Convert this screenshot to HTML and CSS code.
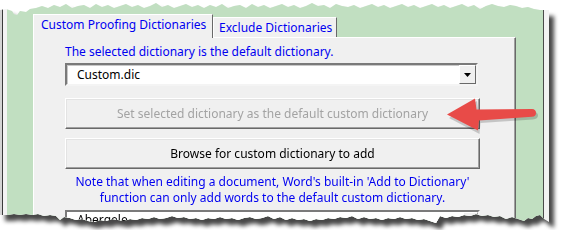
FILE: index.html
```html
<!DOCTYPE html>
<html lang="en">
<head>
    <meta charset="UTF-8">
    <title>Custom Proofing Dictionaries</title>
    <link rel="stylesheet" href="styles.css">
</head>
<body>
    <div class="shot">
        <div class="window">
            <div class="client">
                <div class="tabs">
                    <div class="tab active">Custom Proofing Dictionaries</div>
                    <div class="tab">Exclude Dictionaries</div>
                </div>
                <div class="panel">
                    <div class="label">The selected dictionary is the default dictionary.</div>
                    <div class="combo">
                        <div class="combo-text">Custom.dic</div>
                        <div class="combo-btn">
                            <svg width="7" height="4" viewBox="0 0 7 4"><path d="M0 0h7L3.5 4z" fill="#000"/></svg>
                        </div>
                    </div>
                    <div class="button disabled">Set selected dictionary as the default custom dictionary</div>
                    <div class="button browse">Browse for custom dictionary to add</div>
                    <div class="note">
                        Note that when editing a document, Word's built-in 'Add to Dictionary'<br>
                        function can only add words to the default custom dictionary.
                    </div>
                    <div class="listbox">
                        <div class="list-item">Abergele</div>
                        <div class="scroll-up"></div>
                    </div>
                </div>
            </div>

            <svg class="arrow" width="100" height="44" viewBox="0 0 100 44">
                <path d="M8 24 L36 7 L37.5 18 L92 17.5 Q97 18 97 21.5 Q97 25 92 25.5 L39.5 29 L38.5 40 Z" fill="#000" opacity="0.18" transform="translate(1 2)"/>
                <path d="M7 22.5 L35 6.5 L36.5 17.5 L92 17 Q96 17.3 96 21 Q96 24.5 92 24.8 L39 28.5 L38 38.5 Z" fill="#e84b48"/>
            </svg>
        </div>
    </div>
</body>
</html>
```

FILE: styles.css
```css
body {
    margin: 0;
    background: #fff;
    overflow: hidden;
}

.shot {
    width: 549px;
    filter: drop-shadow(5px 6px 2px rgba(0, 0, 0, 0.72));
}

.window {
    position: relative;
    height: 230px;
    overflow: hidden;
    padding: 0 5px 0 7px;
    background: linear-gradient(to right, #d4d4d4 0 2px, #3a3a3a 2px 3px, #f3f3f3 3px);
    font-family: "Noto Sans", "Liberation Sans", sans-serif;
    font-size: 12px;
    clip-path: polygon(
        0 10px, 6px 9px, 12px 11px, 14px 14px, 17px 15px, 20px 11px, 26px 12px, 30px 9px, 36px 8px, 42px 6px,
        48px 8px, 54px 5px, 60px 7px, 66px 4px, 72px 8px, 78px 6px, 84px 5px, 90px 8px, 96px 4px, 102px 7px,
        108px 5px, 114px 8px, 120px 6px, 126px 4px, 132px 7px, 138px 5px, 144px 8px, 150px 6px, 156px 3px, 162px 7px,
        168px 5px, 174px 8px, 180px 6px, 186px 4px, 192px 7px, 198px 5px, 204px 8px, 210px 5px, 216px 7px, 222px 4px,
        228px 8px, 234px 6px, 240px 5px, 246px 8px, 252px 4px, 258px 7px, 264px 5px, 270px 8px, 276px 6px, 282px 4px,
        288px 7px, 294px 5px, 300px 8px, 306px 6px, 312px 3px, 318px 6px, 324px 5px, 330px 8px, 336px 4px, 342px 6px,
        348px 7px, 354px 5px, 360px 8px, 366px 6px, 372px 4px, 378px 7px, 384px 5px, 390px 8px, 396px 6px, 402px 4px,
        408px 7px, 414px 5px, 420px 8px, 426px 6px, 432px 4px, 438px 7px, 444px 5px, 450px 8px, 456px 6px, 462px 4px,
        468px 7px, 474px 5px, 480px 9px, 486px 6px, 492px 4px, 498px 6px, 504px 7px, 510px 5px, 516px 6px, 522px 8px,
        528px 7px, 534px 9px, 540px 10px, 549px 10px,
        549px 222px, 544px 219px, 540px 215px, 536px 216px, 532px 219px, 528px 218px, 524px 221px, 518px 219px,
        512px 217px, 506px 219px, 500px 216px, 494px 217px, 488px 215px, 482px 216px, 476px 214px, 470px 216px,
        464px 215px, 458px 217px, 452px 216px, 446px 218px, 440px 216px, 436px 223px, 430px 221px, 424px 219px,
        418px 220px, 412px 218px, 406px 219px, 400px 217px, 394px 219px, 388px 218px, 382px 220px, 376px 218px,
        370px 219px, 364px 217px, 358px 219px, 352px 216px, 346px 218px, 340px 217px, 334px 219px, 328px 218px,
        322px 220px, 316px 219px, 310px 221px, 304px 219px, 298px 220px, 292px 218px, 286px 220px, 280px 217px,
        274px 219px, 268px 216px, 262px 218px, 256px 219px, 250px 217px, 244px 218px, 238px 220px, 232px 218px,
        226px 219px, 220px 217px, 214px 219px, 208px 218px, 202px 220px, 196px 218px, 190px 219px, 184px 217px,
        178px 218px, 172px 216px, 166px 218px, 160px 219px, 154px 217px, 148px 219px, 142px 218px, 136px 220px,
        130px 219px, 124px 221px, 118px 220px, 112px 219px, 106px 221px, 100px 220px, 94px 222px, 88px 221px,
        82px 219px, 76px 220px, 70px 218px, 64px 217px, 60px 220px, 56px 216px, 50px 215px, 44px 216px,
        38px 214px, 32px 215px, 26px 214px, 20px 215px, 14px 214px, 8px 215px, 0 215px
    );
}

.client {
    height: 100%;
    padding: 14px 0 0 26px;
    background: #c1dfc1;
    border-right: 1px solid #4a4a4a;
}

.tabs {
    display: flex;
    align-items: flex-end;
    height: 23px;
    position: relative;
    z-index: 1;
}

.tab {
    box-sizing: border-box;
    height: 20px;
    padding: 0 0 0 5px;
    width: 124px;
    line-height: 19px;
    color: #0000f0;
    background: #f0f0f0;
    border: 1px solid #fff;
    border-right-color: #696969;
    border-bottom: none;
}

.tab.active {
    height: 24px;
    width: 180px;
    margin-bottom: -1px;
    padding-left: 7px;
    line-height: 20px;
}

.panel {
    box-sizing: border-box;
    width: 483px;
    height: 200px;
    padding: 6px 0 0 31px;
    background: #f0f0f0;
    border: 1px solid #fff;
    border-right-color: #696969;
    border-bottom-color: #696969;
    box-shadow: inset -1px 0 #a0a0a0;
}

.label {
    line-height: 16px;
    color: #0000f0;
}

.combo {
    display: flex;
    box-sizing: border-box;
    width: 413px;
    height: 23px;
    margin-top: 3px;
    background: #fff;
    border: 2px solid;
    border-color: #7a7a7a #f4f4f4 #f4f4f4 #7a7a7a;
    box-shadow: inset 1px 1px #c8c8c8;
}

.combo-text {
    flex: 1;
    padding-left: 10px;
    line-height: 19px;
    color: #000;
}

.combo-btn {
    display: flex;
    align-items: center;
    justify-content: center;
    box-sizing: border-box;
    width: 17px;
    background: #f0f0f0;
    border: 1px solid;
    border-color: #fff #696969 #696969 #fff;
}

.button {
    box-sizing: border-box;
    width: 415px;
    height: 31px;
    line-height: 29px;
    text-align: center;
    color: #000;
    background: #f0f0f0;
    border: 1px solid;
    border-color: #fff #696969 #696969 #fff;
    box-shadow: inset -1px -1px #a0a0a0, inset 1px 1px #e3e3e3;
}

.button.disabled {
    margin-top: 12px;
    color: #a3a3a3;
}

.button.browse {
    margin-top: 9px;
}

.note {
    width: 415px;
    margin-top: 5px;
    line-height: 16px;
    text-align: center;
    color: #0000f0;
}

.listbox {
    position: relative;
    box-sizing: border-box;
    width: 415px;
    height: 60px;
    margin-top: 4px;
    background: #fff;
    border: 2px solid;
    border-color: #7a7a7a #f4f4f4 #f4f4f4 #7a7a7a;
}

.list-item {
    padding-left: 10px;
    line-height: 16px;
}

.scroll-up {
    position: absolute;
    top: 0;
    right: 0;
    width: 15px;
    height: 16px;
    box-sizing: border-box;
    background: #f0f0f0;
    border: 1px solid;
    border-color: #fff #a0a0a0 #a0a0a0 #fff;
}

.arrow {
    position: absolute;
    left: 440px;
    top: 92px;
}
```
